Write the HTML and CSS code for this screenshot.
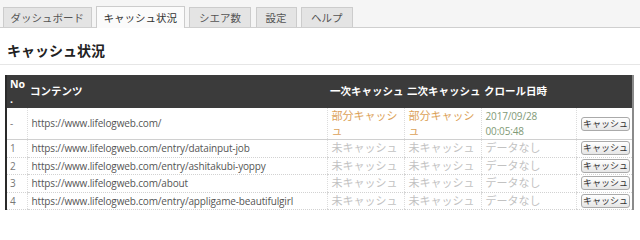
FILE: index.html
```html
<!DOCTYPE html>
<html lang="ja">
<head>
<meta charset="utf-8">
<title>キャッシュ状況</title>
<link rel="stylesheet" href="styles.css">
</head>
<body>
<nav class="tabs">
  <a class="tab">ダッシュボード</a>
  <a class="tab tab--active">キャッシュ状況</a>
  <a class="tab tab--short">シエア数</a>
  <a class="tab tab--short">設定</a>
  <a class="tab tab--short">ヘルプ</a>
</nav>
<main class="panel">
  <h2 class="title">キャッシュ状況</h2>
  <table class="cache">
    <colgroup>
      <col class="c-no"><col class="c-url"><col class="c-st"><col class="c-st"><col class="c-date"><col class="c-btn">
    </colgroup>
    <thead>
      <tr>
        <th class="h-no">No<wbr>.</th>
        <th>コンテンツ</th>
        <th>一次キャッシュ</th>
        <th>二次キャッシュ</th>
        <th>クロール日時</th>
        <th></th>
      </tr>
    </thead>
    <tbody>
      <tr class="first">
        <td class="no">-</td>
        <td class="url">https://www.lifelogweb.com/</td>
        <td class="partial">部分キャッシュ</td>
        <td class="partial">部分キャッシュ</td>
        <td class="date">2017/09/28 00:05:48</td>
        <td class="act"><button class="btn">キャッシュ</button></td>
      </tr>
      <tr>
        <td class="no">1</td>
        <td class="url">https://www.lifelogweb.com/entry/datainput-job</td>
        <td class="none">未キャッシュ</td>
        <td class="none">未キャッシュ</td>
        <td class="none">データなし</td>
        <td class="act"><button class="btn">キャッシュ</button></td>
      </tr>
      <tr>
        <td class="no">2</td>
        <td class="url">https://www.lifelogweb.com/entry/ashitakubi-yoppy</td>
        <td class="none">未キャッシュ</td>
        <td class="none">未キャッシュ</td>
        <td class="none">データなし</td>
        <td class="act"><button class="btn">キャッシュ</button></td>
      </tr>
      <tr>
        <td class="no">3</td>
        <td class="url">https://www.lifelogweb.com/about</td>
        <td class="none">未キャッシュ</td>
        <td class="none">未キャッシュ</td>
        <td class="none">データなし</td>
        <td class="act"><button class="btn">キャッシュ</button></td>
      </tr>
      <tr>
        <td class="no">4</td>
        <td class="url">https://www.lifelogweb.com/entry/appligame-beautifulgirl</td>
        <td class="none">未キャッシュ</td>
        <td class="none">未キャッシュ</td>
        <td class="none">データなし</td>
        <td class="act"><button class="btn">キャッシュ</button></td>
      </tr>
    </tbody>
  </table>
</main>
</body>
</html>
```

FILE: styles.css
```css
html, body {
  margin: 0;
  padding: 0;
  background: #fff;
  font-family: "Open Sans", "Noto Sans CJK JP", sans-serif;
  color: #444;
}

.tabs {
  display: flex;
  align-items: flex-end;
  gap: 4.5px;
  height: 21px;
  padding: 6px 0 0 3px;
  background: #f5f5f5;
  border-bottom: 1px solid #cfcfcf;
}

.tab {
  display: flex;
  align-items: center;
  justify-content: center;
  box-sizing: border-box;
  height: 20px;
  padding: 0 6.5px;
  background: #e4e4e4;
  border: 1px solid #cccccc;
  border-bottom: none;
  font-family: "Noto Sans CJK JP", sans-serif;
  font-size: 10.5px;
  color: #555;
  white-space: nowrap;
}

.tab--short {
  padding: 0 9px;
}

.tab--active {
  height: 22px;
  margin-bottom: -1px;
  background: #fbfbfb;
  color: #333;
}

.panel {
  padding: 0;
}

.title {
  margin: 0 0 10px;
  padding: 15px 7px 7px;
  line-height: 14px;
  font-family: "Noto Sans CJK JP", sans-serif;
  font-size: 14px;
  font-weight: bold;
  color: #222;
  border-bottom: 1px solid #e6e6e6;
}

.cache {
  margin-left: 5px;
  width: 629px;
  table-layout: fixed;
  border-collapse: collapse;
  border-left: 2px solid #2a2a2a;
  border-right: 2px solid #8a8a8a;
  font-size: 10px;
  letter-spacing: -0.15px;
}

.c-no { width: 21px; }
.c-url { width: 300px; }
.c-st { width: 77px; }
.c-date { width: 95px; }
.c-btn { width: 57px; }

.cache thead th {
  background: #3b3b3b;
  color: #fff;
  font-weight: bold;
  text-align: left;
  vertical-align: middle;
  padding: 2px 3px;
  line-height: 14.5px;
  white-space: nowrap;
  font-size: 10.5px;
  letter-spacing: 0;
}

.cache thead th.h-no {
  white-space: normal;
  padding: 2px 3px;
}

.cache tbody td {
  height: 14.5px;
  padding: 1px 4px;
  line-height: 14.5px;
  vertical-align: middle;
  border-bottom: 1px dotted #d2d2d2;
  border-left: 1px dotted #dcdcdc;
  overflow: hidden;
}

.cache tbody tr.first td {
  border-bottom: 1px solid #d0d0d0;
}

.cache tbody td.no {
  border-left: none;
  padding-left: 3px;
  color: #777;
}

.url {
  color: #555;
  white-space: nowrap;
}

.partial,
.none {
  font-size: 11px;
  letter-spacing: 0;
}

.partial {
  color: #dca259;
}

.none {
  color: #c2c2c2;
  white-space: nowrap;
}

.date {
  color: #7f9a77;
}

.cache tbody td.act {
  padding: 1px 2px 1px 0;
}

.btn {
  display: block;
  box-sizing: border-box;
  height: 14px;
  margin: 0 0 0 auto;
  padding: 0 1px;
  border: 1px solid #aaa;
  border-radius: 3px;
  background: linear-gradient(#ffffff, #e6e6e6);
  font-family: "Noto Sans CJK JP", sans-serif;
  font-size: 9px;
  line-height: 12px;
  letter-spacing: 0;
  color: #333;
  white-space: nowrap;
}
```
